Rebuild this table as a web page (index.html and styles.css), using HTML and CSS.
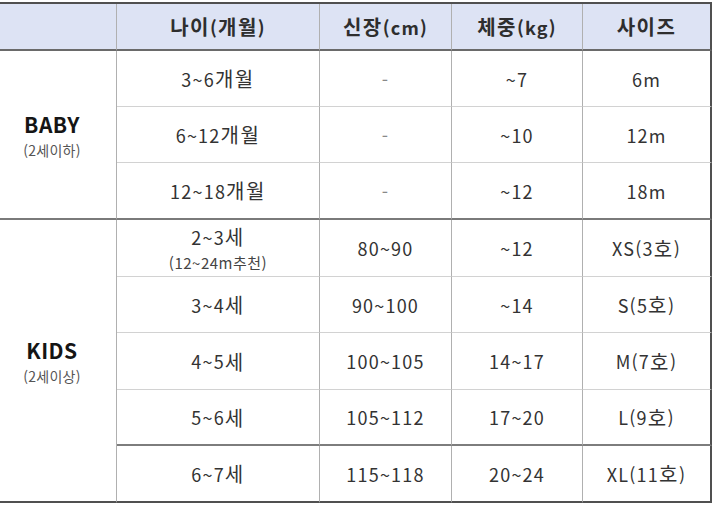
FILE: index.html
```html
<!DOCTYPE html>
<html lang="ko">
<head>
<meta charset="utf-8">
<link rel="stylesheet" href="styles.css">
</head>
<body>
<div class="sheet">
  <div class="grid">
    <div class="cell head"></div>
    <div class="cell head"><span class="k">나이</span>(<span class="k">개월</span>)</div>
    <div class="cell head"><span class="k">신장</span>(cm)</div>
    <div class="cell head"><span class="k">체중</span>(kg)</div>
    <div class="cell head last"><span class="k">사이즈</span></div>

    <div class="cell group g-baby"><span class="gname">BABY</span><span class="gsub">(2세이하)</span></div>
    <div class="cell">3~6<span class="k">개월</span></div>
    <div class="cell dash">-</div>
    <div class="cell">~7</div>
    <div class="cell last">6m</div>

    <div class="cell">6~12<span class="k">개월</span></div>
    <div class="cell dash">-</div>
    <div class="cell">~10</div>
    <div class="cell last">12m</div>

    <div class="cell sep">12~18<span class="k">개월</span></div>
    <div class="cell sep dash">-</div>
    <div class="cell sep">~12</div>
    <div class="cell sep last">18m</div>

    <div class="cell group g-kids end"><span class="gname">KIDS</span><span class="gsub">(2세이상)</span></div>
    <div class="cell two"><span>2~3<span class="k">세</span></span><span class="note">(12~24m추천)</span></div>
    <div class="cell">80~90</div>
    <div class="cell">~12</div>
    <div class="cell last">XS(3<span class="k">호</span>)</div>

    <div class="cell">3~4<span class="k">세</span></div>
    <div class="cell">90~100</div>
    <div class="cell">~14</div>
    <div class="cell last">S(5<span class="k">호</span>)</div>

    <div class="cell">4~5<span class="k">세</span></div>
    <div class="cell">100~105</div>
    <div class="cell">14~17</div>
    <div class="cell last">M(7<span class="k">호</span>)</div>

    <div class="cell dark">5~6<span class="k">세</span></div>
    <div class="cell dark">105~112</div>
    <div class="cell dark">17~20</div>
    <div class="cell dark last">L(9<span class="k">호</span>)</div>

    <div class="cell end">6~7<span class="k">세</span></div>
    <div class="cell end">115~118</div>
    <div class="cell end">20~24</div>
    <div class="cell end last">XL(11<span class="k">호</span>)</div>
  </div>
</div>
</body>
</html>
```

FILE: styles.css
```css
html, body {
  margin: 0;
  padding: 0;
  background: #ffffff;
}

.sheet {
  width: 720px;
  height: 508px;
  padding-top: 2px;
  box-sizing: border-box;
  font-family: "Noto Sans CJK KR", "Noto Sans", sans-serif;
  color: #333333;
}

.grid {
  display: grid;
  width: 712px;
  grid-template-columns: 117px 203px 132px 131px 129px;
  grid-template-rows: 47px 56px 56px 57px 57px 56px 57px 56px 57px;
  border-top: 2px solid #505050;
}

.cell {
  box-sizing: border-box;
  display: flex;
  align-items: center;
  justify-content: center;
  white-space: nowrap;
  border-right: 1px solid #b0b0b0;
  border-bottom: 1px solid #d2d2d2;
  font-size: 18px;
  letter-spacing: 1.2px;
}

.k {
  font-size: 20px;
  letter-spacing: 1.5px;
}

.cell.last {
  border-right: 2px solid #505050;
}

.head {
  background: #dde3f4;
  border-bottom: 2px solid #6a6a6a;
  font-weight: bold;
  color: #2e2e2e;
}

.group {
  flex-direction: column;
  padding-right: 12px;
  border-bottom: 2px solid #7a7a7a;
  letter-spacing: 0;
}

.g-baby {
  grid-row: span 3;
}

.g-kids {
  grid-row: span 5;
}

.gname {
  font-weight: bold;
  font-size: 21px;
  color: #151515;
  line-height: 30px;
  letter-spacing: 0.5px;
}

.gsub {
  font-size: 14px;
  color: #555555;
  line-height: 22px;
  letter-spacing: 0.3px;
}

.sep {
  border-bottom: 2px solid #7a7a7a;
}

.dark {
  border-bottom: 2px solid #7d7d7d;
}

.end {
  border-bottom: 2px solid #505050;
}

.dash {
  color: #888888;
}

.two {
  flex-direction: column;
  line-height: 25px;
  padding-top: 2px;
}

.note {
  font-size: 15px;
  color: #444444;
  letter-spacing: 0.5px;
}
```
